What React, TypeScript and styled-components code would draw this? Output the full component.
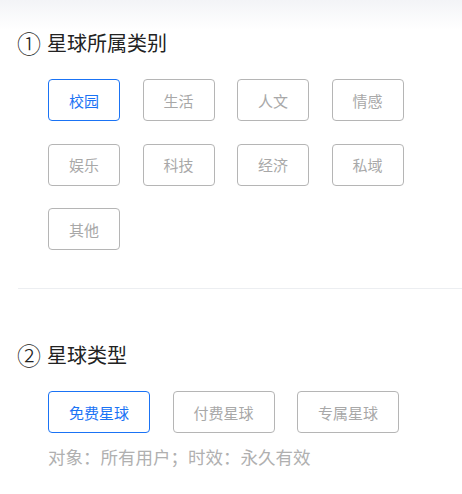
import React, { useState } from 'react';
import styled, { createGlobalStyle } from 'styled-components';

const GlobalStyle = createGlobalStyle`
  body {
    margin: 0;
    background: #fff;
    font-family: "Noto Sans CJK SC", "Noto Sans", sans-serif;
  }
`;

const Page = styled.div`
  min-height: 494px;
  background: linear-gradient(#f3f4f7 0, #ffffff 30px);
  padding-top: 29px;
  box-sizing: border-box;
`;

const Section = styled.section`
  padding: 0 0 0 18px;
`;

const Title = styled.h2`
  margin: 0;
  height: 28px;
  line-height: 28px;
  font-size: 20px;
  font-weight: 400;
  color: #222;
  display: flex;
  align-items: center;
  gap: 6px;
`;

const Num = styled.span`
  font-size: 24px;
  font-weight: 300;
  margin-left: -1px;
`;

const Options = styled.div`
  display: grid;
  grid-template-columns: repeat(4, max-content);
  column-gap: 22.5px;
  row-gap: 22.5px;
  padding-left: 30px;
  margin-top: 22px;
`;

const TypeOptions = styled(Options)`
  grid-template-columns: repeat(3, max-content);
`;

const Option = styled.button<{ $active: boolean }>`
  height: 42px;
  padding: 0 20px;
  box-sizing: border-box;
  border: 1px solid ${(p) => (p.$active ? '#1a73f5' : '#b5b5b5')};
  border-radius: 4px;
  background: #fff;
  color: ${(p) => (p.$active ? '#1a73f5' : '#a8a8a8')};
  font-family: inherit;
  font-size: 15px;
  line-height: 1;
  cursor: pointer;
`;

const Divider = styled.hr`
  margin: 38px 0 52px 18px;
  border: 0;
  border-top: 1px solid #eceef1;
`;

const Hint = styled.p`
  margin: 12px 0 0 30px;
  font-size: 17.5px;
  line-height: 24px;
  color: #b0b0b0;
`;

const categories = ['校园', '生活', '人文', '情感', '娱乐', '科技', '经济', '私域', '其他'];
const types = [
  { name: '免费星球', hint: '对象：所有用户；时效：永久有效' },
  { name: '付费星球', hint: '对象：付费用户；时效：按期有效' },
  { name: '专属星球', hint: '对象：指定用户；时效：永久有效' },
];

export default function App() {
  const [category, setCategory] = useState('校园');
  const [type, setType] = useState(0);

  return (
    <Page>
      <GlobalStyle />
      <Section>
        <Title>
          <Num>①</Num>星球所属类别
        </Title>
        <Options>
          {categories.map((c) => (
            <Option key={c} $active={c === category} onClick={() => setCategory(c)}>
              {c}
            </Option>
          ))}
        </Options>
      </Section>
      <Divider />
      <Section>
        <Title>
          <Num>②</Num>星球类型
        </Title>
        <TypeOptions>
          {types.map((t, i) => (
            <Option key={t.name} $active={i === type} onClick={() => setType(i)}>
              {t.name}
            </Option>
          ))}
        </TypeOptions>
        <Hint>{types[type].hint}</Hint>
      </Section>
    </Page>
  );
}
